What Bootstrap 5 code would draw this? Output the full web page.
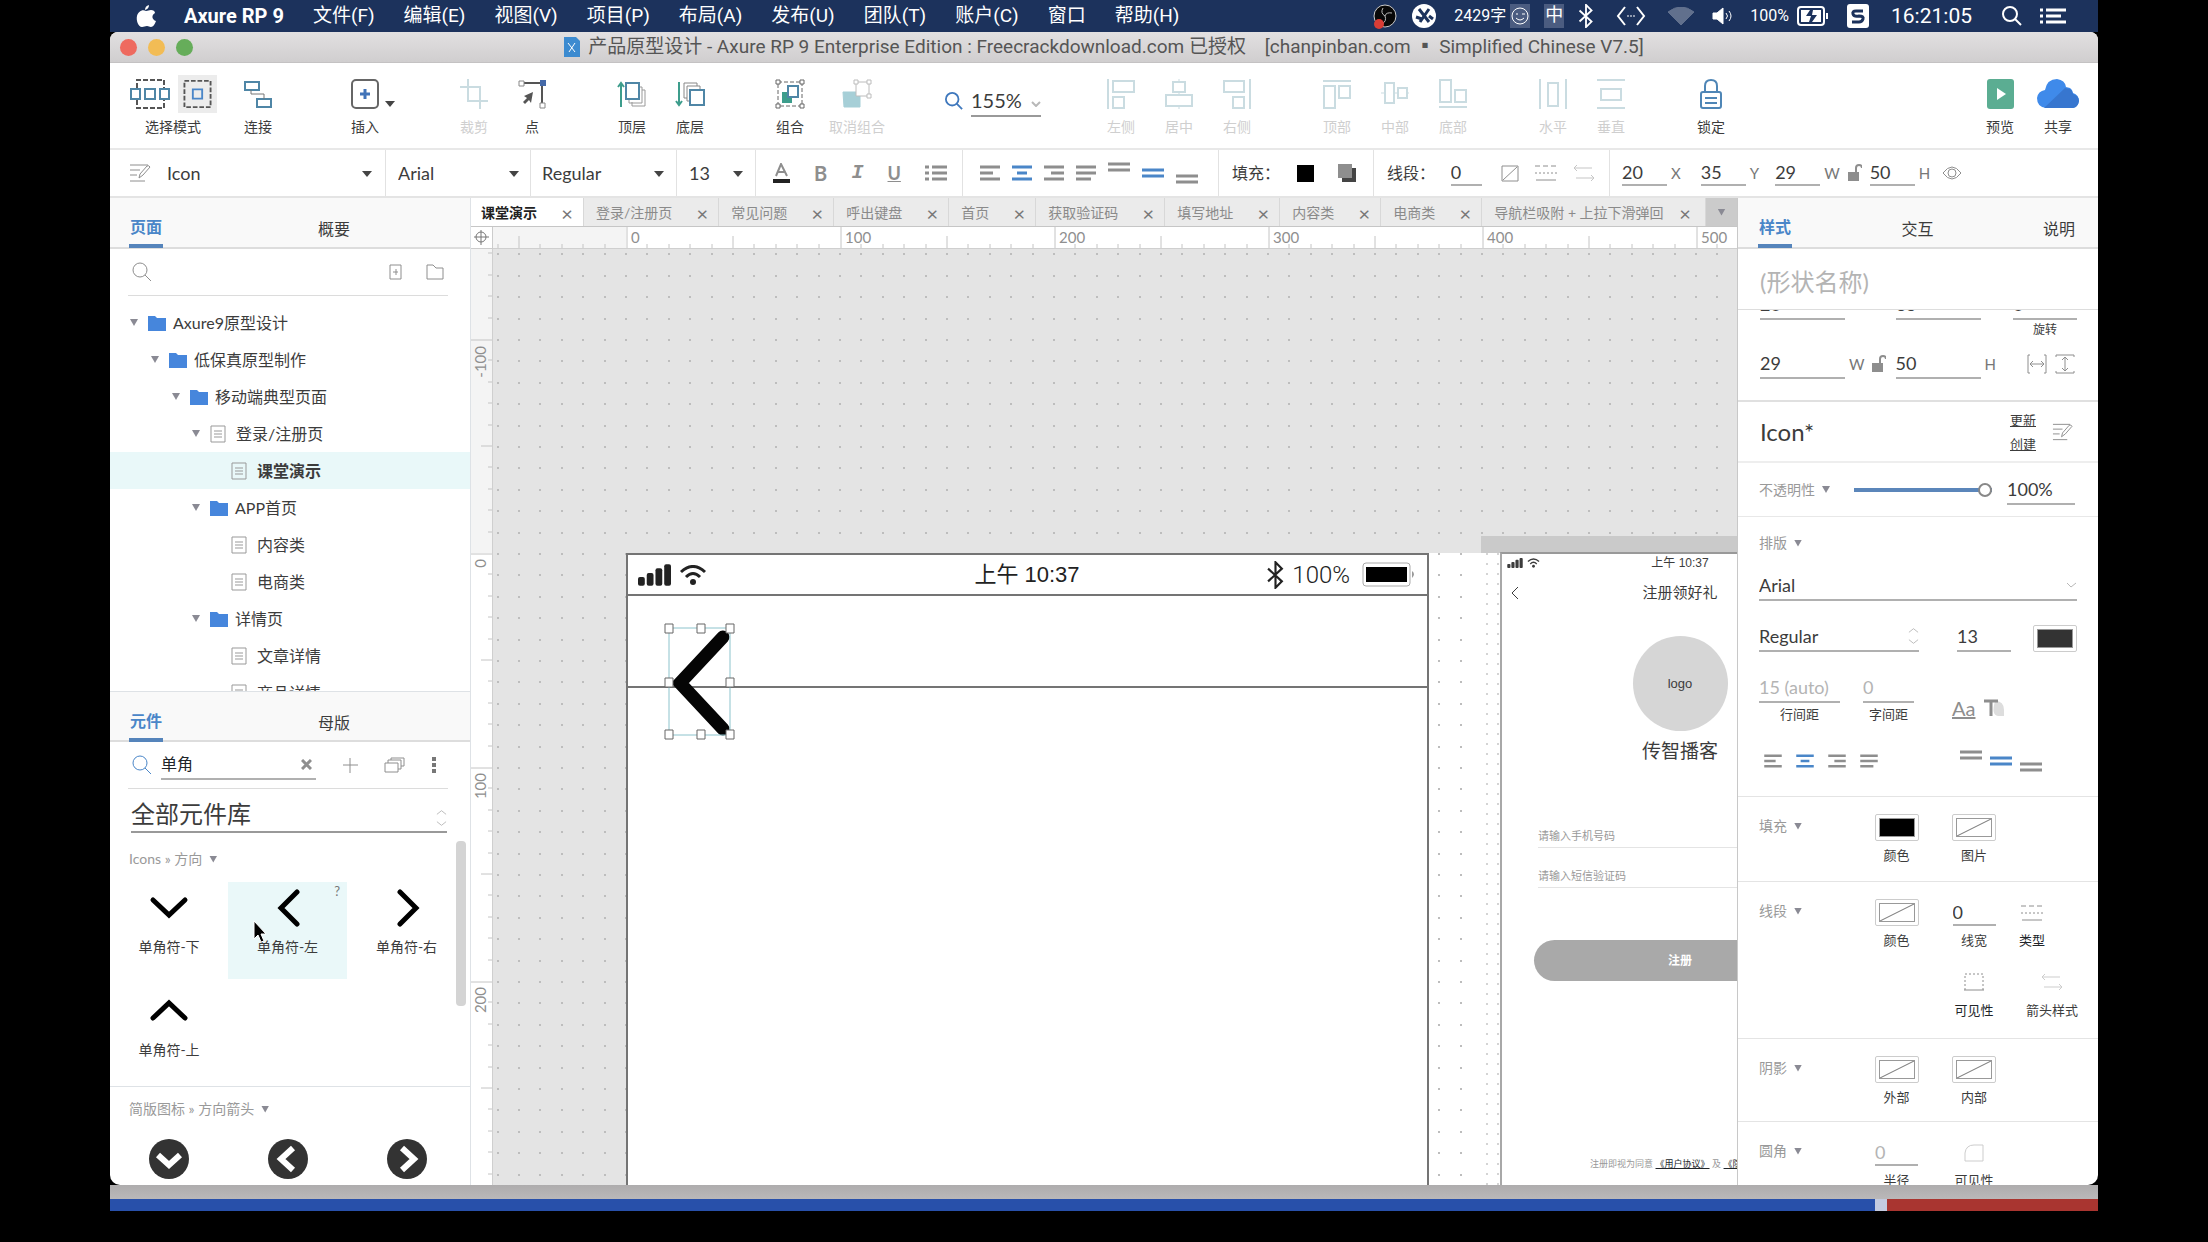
<!DOCTYPE html>
<html lang="zh-CN">
<head>
<meta charset="utf-8">
<meta name="viewport" content="width=device-width, initial-scale=1">
<title>产品原型设计 - Axure RP 9</title>
<link href="https://cdn.jsdelivr.net/npm/bootstrap@5.3.0/dist/css/bootstrap.min.css" rel="stylesheet">
<style>
:root{--ink:#3c3c3c;--blue:#4a86c8}
body{background:#000;color:var(--ink);font-family:Lato,"Noto Sans CJK SC",sans-serif;font-size:16px;line-height:24px;padding:0 110px;overflow:hidden}
button,input,select{font-family:inherit;color:inherit;background:none;border:0;padding:0;border-radius:0}
select{appearance:none}
svg{fill:none;stroke:currentColor;flex:none;display:block}
a{color:inherit}
.sysfont{font-family:Roboto,"Noto Sans CJK SC",sans-serif}
.menubar{height:32px;background:#1c325c;color:#fff;font-size:19px;padding:0 32px 0 26px}
.menubar nav{gap:29px}
.menubar a{text-decoration:none}
.tray{gap:14px;font-size:16px}
.imebox{background:#4b5c80;width:20px;height:24px;line-height:22px;text-align:center;font-size:18px}
.clock{font-size:21px}
.appwin{background:#fff;border-radius:8px 8px 10px 10px;overflow:hidden;min-height:0}
.titlebar{height:31px;background:linear-gradient(#e2e0e1,#d0cecf);color:#555;font-size:19px;border-bottom:1px solid #c4c2c3;position:relative}
.lights{position:absolute;left:10px;top:7px;gap:11px}
.lights button{width:17px;height:17px;border-radius:50%}
.toolbar{height:87px;border-bottom:2px solid #e8e8e8;padding:12px 11px 0 7px;font-size:14px}
.tool{width:58px;line-height:20px;display:flex;flex-direction:column;align-items:center}
.tool .pic{height:38px;margin-bottom:4px;display:flex;align-items:center;justify-content:center}
.tool.wide{width:76px}
.tool.pair{width:112px}
.tool.off{color:#cfcfcf}
.gapl{margin-left:51px}.gapm{margin-left:42px}
.tool.ins{margin-left:49px}
.pic .on{background:#ececec;padding:5px 4px}
.tool.off .pic svg{opacity:.55;color:#9fc0ca}
.tint{color:#3f78bd}.steel{color:#4f86b6}.pale{color:#b8b8b8}
.zoomer{font-size:20px;margin:9px 0 0 50px;height:34px}
.zoomer label{border-bottom:2px solid #999;width:70px;height:32px}
.fmtbar{height:48px;border-bottom:2px solid #e4e4e4;font-size:18px}
.fmtbar>div{height:46px;display:flex;align-items:center;border-right:1px solid #e2e2e2}
.fmtbar>div:last-child{border:0}
.pick{position:relative;display:flex;align-items:center}
.pick select{width:100%}
.caret::after{content:"";position:absolute;right:0;top:50%;margin-top:-2px;width:10px;height:6px;background:#444;clip-path:polygon(0 0,100% 0,50% 100%);pointer-events:none}
.tri{display:inline-block;width:8px;height:7px;background:#8a8a94;clip-path:polygon(0 0,100% 0,50% 100%);flex:none}
.uline{border-bottom:2px solid #b0b0b0;height:30px;font-size:18px;min-width:0}
.fmtbar .uline{width:45px;height:26px}
.grey{color:#8e8e8e}
.fbtn{color:#8e8e8e;display:flex;align-items:center;justify-content:center}
.hit,.fbtn.hit{color:var(--blue)}
.unit{font-size:15px;color:#777}
.side{width:360px;flex:none}
.sideR{width:361px;flex:none;border-left:1px solid #c8c8c8}
.ptabs{height:51px;background:#f9f9f9;border-bottom:2px solid #ddd;font-size:16px;position:relative;z-index:1}
.ptabs button{height:50px;padding-top:12px}
.ptabs .now{color:var(--blue);font-weight:700;border-bottom:4px solid #5584bb;width:34px}
.upper{height:493px;overflow:hidden;flex:none}
.findrow{margin:0 22px 0 18px;height:47px;border-bottom:1px solid #dcdcdc;color:#8e8e8e}
.tree{list-style:none;margin:0;padding:8px 0 0}
.tree li{height:37px;display:flex;align-items:center;padding-left:20px}
.tree li.l1{padding-left:41px}.tree li.l2{padding-left:62px}.tree li.l3{padding-left:82px}.tree li.l4{padding-left:121px}
.tree .tri{margin-right:10px}
.tree svg{margin-right:7px}.tree svg.doc{margin-right:10px;color:#999}
.tree .picked{background:#e9f8f9;font-weight:700}
.lib{font-size:24px;border-bottom:2px solid #999;height:44px;margin:0 23px 0 21px}
.libscroll{position:relative;overflow:hidden}
.thumb{position:absolute;right:4px;top:8px;width:10px;height:165px;border-radius:4px;background:#d4d4d4}
.libhead{font-size:14px;color:#999;padding:14px 0 0 19px;display:flex;align-items:center;gap:7px}
.grid3{display:grid;grid-template-columns:118px 119px 119px;row-gap:6px;padding-top:11px}
.grid3 button{height:97px;font-size:14px;display:flex;flex-direction:column;align-items:center;position:relative;padding-top:7px}
.grid3 button svg{margin-bottom:8px;color:#000}
.grid3 .hov{background:#eaf8f9}
.q{position:absolute;right:7px;top:-3px;color:#777;font-size:13px}
.mouse{position:absolute;left:24px;top:38px}
.dtabs{height:29px;background:#ebebeb;border-bottom:1px solid #c6c6c6;font-size:14px;color:#8a8a8a}
.dtab{padding:1px 10px 0 12px;border-right:1px solid #d8d8d8;display:flex;align-items:center;gap:24px;white-space:nowrap;flex:none}
.dtab a{text-decoration:none}
.dtab span{font-size:20px;font-weight:400;line-height:20px;color:#777;width:12px;text-align:center}
.dtab.cur{background:#fff;color:#222;font-weight:700;padding-left:10px}
.dtab.tail{flex:1 1 0;min-width:0;justify-content:space-between;gap:0;padding-right:14px;overflow:hidden}
.more{width:31px;background:#cbcbcb}
.stage{position:relative;overflow:hidden;background:#fff}
.stage>.ground,.rulerv svg,.rulerh svg{position:absolute;left:0;top:0}
.rulerh{height:22px;border-bottom:1px solid #cfcfcf;position:relative;overflow:hidden}
.rulerv{width:22px;border-right:1px solid #cfcfcf;position:relative;overflow:hidden;flex:none}
.corner{width:22px;height:22px;border-right:1px solid #ccc;border-bottom:1px solid #ccc;color:#777}
.rl{fill:#8f8f8f;stroke:none;font-size:15px}
.phone{position:absolute;left:133px;top:304px;width:803px;height:900px;background:#fff;border:2px solid #747474;color:#222}
.pbar{height:41px;border-bottom:2px solid #747474;display:grid;grid-template-columns:1fr auto 1fr;align-items:center;padding:0 11px 0 10px;font-size:22px;font-family:"Liberation Sans","Noto Sans CJK SC",sans-serif}
.light{font-family:Roboto,sans-serif;font-weight:300;font-size:24px}
.phead{height:92px;border-bottom:2px solid #747474}
.selbox{position:absolute;left:171px;top:374px}
.phone2{position:absolute;left:1007px;top:303px;width:358px;height:900px;background:#fff;border-left:2px solid #a8a8a8;border-top:2px solid #999;font-family:"Liberation Sans","Noto Sans CJK SC",sans-serif}
.p2bar{display:grid;grid-template-columns:1fr auto 1fr;padding:0 5px;height:18px;line-height:18px;font-size:12px;align-items:center}
.p2bar.p2title{height:42px;font-size:15px}
.logo{width:95px;height:95px;border-radius:50%;background:#d6d6d6;font-size:13px}
.ph{display:block;width:100%;border-bottom:1px solid #e4e4e4;height:24px;font-size:11px}
.ph::placeholder,.faint::placeholder{color:#b4b4b4;opacity:1}
.ph::placeholder{color:#9a9a9a}
.reg{height:41px;border-radius:21px;background:#a9a9a9;color:#fff;font-size:12px;font-weight:700;width:292px}
.terms{padding:171px 0 0 88px;font-size:9px;color:#999}
.sec{border-top:1px solid #e4e4e4;display:grid;grid-template-columns:96px 83px 72px 44px;padding:17px 0 0 21px;font-size:14px}
.seclab{color:#999;font-size:14px;display:flex;align-items:center;gap:7px;white-space:nowrap;height:24px}
.cell{display:flex;flex-direction:column;align-items:center;font-size:13px;line-height:20px;justify-self:center;white-space:nowrap}
.cell>.box{height:27px;margin-bottom:5px;display:flex;align-items:center}
.sw{width:44px;height:27px;border:1px solid #ccc;border-radius:2px;padding:3px;color:#999;display:block}
.sw i{display:block;height:19px;border:1px solid #999}
.sw .nil{background:linear-gradient(to bottom right,transparent 47%,#999 49%,#999 51%,transparent 53%)}
.shape{height:61px;border-bottom:1px solid #ddd;padding:4px 22px 0}
.shape input{font-size:24px;width:100%}
.range{appearance:none;width:138px;height:14px;background:linear-gradient(#5b86ba,#5b86ba) center/100% 4px no-repeat}
.range::-webkit-slider-thumb{appearance:none;width:14px;height:14px;border-radius:50%;border:2px solid #888;background:#fff}
.dims{height:90px;display:flow-root}
.dims .pos{margin-top:-20px;padding:0 21px 0 22px}
.desk{height:14px;background:linear-gradient(#aeacad,#bab8b9)}
.dock{height:12px;margin-bottom:31px;background:#c4cbe0}
.dock .db{background:#2850aa;flex:1 1 auto}.dock .dr{background:#a93530;width:211px;margin-left:12px}
</style>
<script src="https://cdn.jsdelivr.net/npm/bootstrap@5.3.0/dist/js/bootstrap.bundle.min.js"></script>
</head>
<body class="vh-100 d-flex flex-column">

<svg width="0" height="0" class="position-absolute">
  <defs>
    <symbol id="pencil" viewBox="0 0 22 20"><path d="M1 2h18M1 7h10M1 12h7M1 18h15M10 15l1-4 7-8q2-1 3 1l-7 8z"/></symbol>
    <symbol id="al" viewBox="0 0 20 16"><path d="M0 2h20M0 8h13M0 14h20" stroke-width="3"/></symbol>
    <symbol id="ac" viewBox="0 0 20 16"><path d="M0 2h20M5 8h10M0 14h20" stroke-width="3"/></symbol>
    <symbol id="ar" viewBox="0 0 20 16"><path d="M0 2h20M7 8h13M0 14h20" stroke-width="3"/></symbol>
    <symbol id="aj" viewBox="0 0 20 16"><path d="M0 2h20M0 8h20M0 14h15" stroke-width="3"/></symbol>
    <symbol id="vt" viewBox="0 0 22 22"><path d="M0 2h22M0 8h22" stroke-width="3"/></symbol>
    <symbol id="vm" viewBox="0 0 22 22"><path d="M0 8h22M0 14h22" stroke-width="3"/></symbol>
    <symbol id="vb" viewBox="0 0 22 22"><path d="M0 14h22M0 20h22" stroke-width="3"/></symbol>
    <symbol id="lines" viewBox="0 0 22 18"><path d="M0 2h22" stroke-dasharray="5 3"/><path d="M0 9h22" stroke-dasharray="2 2"/><path d="M1 16h20"/></symbol>
    <symbol id="arrows" viewBox="0 0 22 18"><path d="M4 1L1 4l3 3M1 4h18M18 11l3 3-3 3M21 14H3"/></symbol>
    <symbol id="lock" viewBox="0 0 14 18"><path d="M0 8h11v9H0z" fill="currentColor" stroke="none"/><path d="M8 8V4q0-3 3-3t3 3" stroke-width="2"/></symbol>
    <symbol id="glass" viewBox="0 0 20 20"><circle cx="8" cy="8" r="7"/><path d="M13 13l6 6"/></symbol>
    <symbol id="folder" viewBox="0 0 18 16"><path d="M0 1h7l2 2h9v13H0z" fill="#4686dc" stroke="none"/></symbol>
    <symbol id="doc" viewBox="0 0 16 18"><path d="M1 1h14v16H1zM4 6h8M4 9h8M4 12h8"/></symbol>
    <symbol id="updown" viewBox="0 0 12 18"><path d="M1 5l5-4 5 4M1 13l5 4 5-4"/></symbol>
    <symbol id="bt" viewBox="0 0 16 26"><path d="M1 7l13 12-6 6V1l6 6L1 19"/></symbol>
    <symbol id="bars" viewBox="0 0 34 22"><g fill="currentColor" stroke="none"><rect y="13" width="7" height="9" rx="2"/><rect x="9" y="9" width="7" height="13" rx="2"/><rect x="18" y="4" width="7" height="18" rx="2"/><rect x="27" width="7" height="22" rx="2"/></g></symbol>
    <symbol id="wifi" viewBox="0 0 28 20"><path d="M2 7q12-11 24 0M7 12q7-7 14 0" stroke-width="3"/><circle cx="14" cy="17" r="3" fill="currentColor" stroke="none"/></symbol>
  </defs>
</svg>

<header class="menubar sysfont d-flex align-items-center flex-shrink-0">
  <svg width="20" height="24" viewBox="0 0 20 24" style="fill:#fff;stroke:none" aria-label="Apple"><path d="M13 1q0 4-4 5 0-4 4-5zM10 7c2 0 3-1 5-1s4 1 4 3c-4 2-3 7 1 8-1 3-3 6-5 6s-2-1-4-1-3 1-5 1C2 23 0 16 1 12s5-7 9-5z"/></svg>
  <nav class="d-flex align-items-center ms-4 ps-1 text-nowrap">
    <a href="#" class="fw-bold fs-5">Axure RP 9</a><a href="#">文件(F)</a><a href="#">编辑(E)</a><a href="#">视图(V)</a><a href="#">项目(P)</a><a href="#">布局(A)</a><a href="#">发布(U)</a><a href="#">团队(T)</a><a href="#">账户(C)</a><a href="#">窗口</a><a href="#">帮助(H)</a>
  </nav>
  <div class="tray d-flex align-items-center ms-auto">
    <svg width="25" height="25" viewBox="0 0 25 25"><circle cx="12" cy="12" r="11" fill="#080808" stroke="#ccc"/><path d="M12 12q-5-3-2-8M12 12q1-4 7-3M12 12q2 5-3 8" stroke="#bbb"/><circle cx="6" cy="20" r="5" fill="#d93d36" stroke="none"/></svg>
    <svg width="24" height="24" viewBox="0 0 24 24"><circle cx="12" cy="12" r="12" fill="#fff" stroke="none"/><path d="M7 5l10 13M17 5L8 18M4 13l6 2M17 12l4 3" stroke="#1c325c" stroke-width="3"/></svg>
    <span class="d-flex align-items-center">&nbsp;2429字<svg class="ms-1 imebox" width="20" height="22" viewBox="0 0 20 22"><circle cx="10" cy="11" r="8"/><path d="M6 9h2M12 9h3M6 13q4 4 8 0"/></svg></span>
    <span class="imebox">中</span>
    <svg width="16" height="24" stroke-width="2"><use href="#bt"/></svg>
    <svg class="mx-2" width="30" height="20" viewBox="0 0 30 20" stroke-width="2"><path d="M9 1L2 10l7 9M21 1l7 9-7 9"/><path d="M11 10h8" stroke-dasharray="2 1" opacity=".5"/></svg>
    <svg width="26" height="18" viewBox="0 0 26 18" opacity=".3"><path d="M0 5q13-10 26 0L13 18z" fill="#fff"/></svg>
    <svg class="ms-1" width="20" height="20" viewBox="0 0 20 20"><path d="M1 7h4l6-5v16l-6-5H1z" fill="#fff"/><path d="M14 7q3 3 0 6M17 5q4 5 0 10"/></svg>
    <span class="d-flex align-items-center ms-1">100%<svg class="ms-2" width="32" height="20" viewBox="0 0 32 20" stroke-width="2"><rect x="1" y="1" width="26" height="18" rx="3"/><path d="M30 7v6"/><path d="M4 4h9l-4 6h5l-2 6H4zM16 4h8v12h-9l5-7h-5z" fill="#fff" stroke="none"/></svg></span>
    <svg class="ms-1" width="22" height="24" viewBox="0 0 22 24"><rect width="22" height="24" rx="3" fill="#fff" stroke="none"/><path d="M16 7H9q-4 0-3 3t6 2q5 0 4 3t-4 3H5" stroke="#1c325c" stroke-width="3"/></svg>
    <span class="clock ms-2 me-2">16:21:05</span>
    <svg class="ms-2" width="20" height="20" stroke-width="2"><use href="#glass"/></svg>
    <svg class="ms-1" width="26" height="16" viewBox="0 0 26 16" stroke-width="3"><path d="M0 2h3M6 2h20M0 8h3M6 8h15M0 14h3M6 14h20"/></svg>
  </div>
</header>

<div class="appwin d-flex flex-column flex-grow-1">
  <div class="titlebar sysfont d-flex justify-content-center align-items-center flex-shrink-0">
    <div class="lights d-flex"><button aria-label="关闭" style="background:#ee6a5f"></button><button aria-label="最小化" style="background:#f2bc55"></button><button aria-label="缩放" style="background:#66ad5a"></button></div>
    <svg class="me-2" width="16" height="20" viewBox="0 0 16 20"><path d="M0 0h12l4 4v16H0z" fill="#3c8bd0" stroke="none"/><path d="M4 6l7 9M11 6l-6 9" stroke="#fff" stroke-width="1"/></svg>
    <span class="text-nowrap">产品原型设计 - Axure RP 9 Enterprise Edition : Freecrackdownload.com 已授权 &nbsp; &nbsp;[chanpinban.com ▪ Simplified Chinese V7.5]</span>
  </div>

  <div class="toolbar d-flex align-items-start flex-shrink-0">
    <button class="tool pair"><span class="pic gap-2">
      <svg width="40" height="30" viewBox="0 0 40 30"><path d="M7 9V1h27v8M7 21v8h27v-8" stroke="#555" stroke-dasharray="5 2" stroke-width="2"/><path d="M1 10h9v10H1zM15 10h10v10H15zM30 10h9v10h-9z" stroke="#4f86a6" stroke-width="2"/></svg>
      <svg class="on" width="39" height="38" viewBox="0 0 30 30"><path d="M1 1h28v28H1z" stroke="#555" stroke-dasharray="5 2" stroke-width="2"/><path d="M10 10h10v10H10z" stroke="#4a86c8" stroke-width="2"/></svg></span>选择模式</button>
    <button class="tool"><span class="pic"><svg width="28" height="28" viewBox="0 0 28 28"><path d="M1 2h14v8H1zM13 19h14v8H13z" stroke="#4f86a6" stroke-width="2"/><path d="M7 10v4h13v5" stroke="#777"/></svg></span>连接</button>
    <button class="tool ins position-relative"><span class="pic"><svg width="28" height="30" viewBox="0 0 28 30"><rect x="1" y="1" width="26" height="28" rx="4" stroke="#666" stroke-width="2"/><path d="M14 10v10M9 15h10" stroke="#4173b8" stroke-width="3"/></svg></span>插入<span class="caret position-absolute" style="right:-1px;top:28px"></span></button>
    <button class="tool off gapl" disabled><span class="pic"><svg width="28" height="30" viewBox="0 0 28 30" stroke-width="2"><path d="M0 8h20v22M8 0v22h20"/></svg></span>裁剪</button>
    <button class="tool"><span class="pic"><svg width="28" height="30" viewBox="0 0 28 30"><path d="M4 4h20v22" stroke="#555" stroke-width="2"/><path d="M1 2h5v5H1zM22 24h5v5h-5z" stroke="#888" fill="#fff"/><path d="M22 1h6v6h-6z" fill="#456aa8" stroke="none"/><path d="M15 13l-2 11-2-3-4 4-2-2 4-4-3-2z" fill="#555" stroke="none"/></svg></span>点</button>
    <button class="tool gapm"><span class="pic"><svg width="30" height="28" viewBox="0 0 30 28"><path d="M4 27V3M1 7l3-4 3 4" stroke="#3d9d8c" stroke-width="2"/><path d="M15 22v4h13V10h-3M12 20v3h13V7h-3" stroke="#999"/><path d="M9 3h13v16H9z" fill="#fff" stroke="#4f86a6" stroke-width="2"/></svg></span>顶层</button>
    <button class="tool"><span class="pic"><svg width="30" height="28" viewBox="0 0 30 28"><path d="M4 2v23M1 21l3 4 3-4" stroke="#3d9d8c" stroke-width="2"/><path d="M12 18H9V3h13v3M15 21h-3V6h13v3" stroke="#888"/><path d="M15 10h14v15H15z" fill="#fff" stroke="#4f86a6" stroke-width="2"/></svg></span>底层</button>
    <button class="tool gapm"><span class="pic"><svg width="30" height="30" viewBox="0 0 30 30"><path d="M3 3h24v24H3z" stroke="#666" stroke-dasharray="4 2"/><path d="M1 1h4v4H1zM25 1h4v4h-4zM1 25h4v4H1zM25 25h4v4h-4z" fill="#fff" stroke="#666"/><path d="M7 13h10v11H7z" fill="#3d9d8c" stroke="none"/><path d="M13 7h10v11H13z" fill="#fff" stroke="#4f86a6" stroke-width="2"/></svg></span>组合</button>
    <button class="tool wide off" disabled><span class="pic"><svg width="30" height="30" viewBox="0 0 30 30"><path d="M1 13h13v4h4v11H2z" fill="#5fa9b8" stroke="#5fa9b8"/><path d="M14 3h13v14H14z" fill="#fff" stroke="#888"/><path d="M12 1h4v4h-4zM25 1h4v4h-4zM25 15h4v4h-4z" fill="#fff" stroke="#888"/></svg></span>取消组合</button>
    <div class="zoomer d-flex align-items-center gap-2"><svg class="tint" width="18" height="20" stroke-width="2"><use href="#glass"/></svg><label class="pick"><select aria-label="缩放比例"><option>155%</option></select><svg class="pale position-absolute end-0 bottom-0 mb-2" width="10" height="6" viewBox="0 0 10 6" stroke-width="2"><path d="M1 1l4 4 4-4"/></svg></label></div>
    <button class="tool off gapl" disabled><span class="pic"><svg width="28" height="30" viewBox="0 0 28 30" stroke-width="2"><path d="M1 0v30M6 2h21v11H6zM6 18h11v11H6z"/></svg></span>左侧</button>
    <button class="tool off" disabled><span class="pic"><svg width="28" height="30" viewBox="0 0 28 30" stroke-width="2"><path d="M14 0v30" stroke-width="1"/><path d="M8 3h12v10H8zM1 16h26v11H1z" fill="#fff"/></svg></span>居中</button>
    <button class="tool off" disabled><span class="pic"><svg width="28" height="30" viewBox="0 0 28 30" stroke-width="2"><path d="M27 0v30M1 2h20v11H1zM10 18h11v11H10z"/></svg></span>右侧</button>
    <button class="tool off gapm" disabled><span class="pic"><svg width="28" height="30" viewBox="0 0 28 30" stroke-width="2"><path d="M0 2h28M1 7h11v22H1zM16 7h11v12H16z"/></svg></span>顶部</button>
    <button class="tool off" disabled><span class="pic"><svg width="28" height="30" viewBox="0 0 28 30" stroke-width="2"><path d="M0 14h28" stroke-width="1"/><path d="M4 4h9v20H4zM17 9h9v10h-9z" fill="#fff"/></svg></span>中部</button>
    <button class="tool off" disabled><span class="pic"><svg width="28" height="30" viewBox="0 0 28 30" stroke-width="2"><path d="M0 28h28M1 1h11v22H1zM16 11h11v12H16z"/></svg></span>底部</button>
    <button class="tool off gapm" disabled><span class="pic"><svg width="28" height="30" viewBox="0 0 28 30" stroke-width="2"><path d="M1 0v30M27 0v30M9 4h10v23H9z"/></svg></span>水平</button>
    <button class="tool off" disabled><span class="pic"><svg width="28" height="30" viewBox="0 0 28 30" stroke-width="2"><path d="M0 1h28M0 29h28M4 10h20v11H4z"/></svg></span>垂直</button>
    <button class="tool gapm"><span class="pic"><svg class="steel" width="22" height="30" viewBox="0 0 22 30" stroke-width="2"><path d="M5 13V7q0-6 6-6t6 6v6"/><rect x="1" y="13" width="20" height="16" rx="2"/><path d="M5 19h12M5 24h12"/></svg></span>锁定</button>
    <button class="tool ms-auto"><span class="pic"><svg width="27" height="30" viewBox="0 0 27 30"><rect width="27" height="30" rx="3" fill="#5bad92" stroke="none"/><path d="M10 9l9 6-9 6z" fill="#fff" stroke="none"/></svg></span>预览</button>
    <button class="tool"><span class="pic"><svg width="42" height="30" viewBox="0 0 42 30"><path d="M9 29q-9-1-9-10 1-7 8-8Q10 0 20 0q8 1 9 8l4 1q3 2 3 5 6 2 6 8-1 6-6 7z" fill="#3f8aea" stroke="none"/><path d="M7 29L28 9l5 1q3 2 3 5 6 2 6 7-1 6-6 7z" fill="#3776cf" stroke="none"/></svg></span>共享</button>
  </div>

  <div class="fmtbar d-flex flex-shrink-0">
    <div style="width:276px;padding:0 13px 0 19px"><svg class="grey me-3" width="22" height="20"><use href="#pencil"/></svg><label class="pick caret flex-grow-1"><select aria-label="样式"><option>Icon</option></select></label></div>
    <div style="width:145px;padding:0 11px 0 12px"><label class="pick caret flex-grow-1"><select aria-label="字体"><option>Arial</option></select></label></div>
    <div style="width:146px;padding:0 12px 0 11px"><label class="pick caret flex-grow-1"><select aria-label="字型"><option>Regular</option></select></label></div>
    <div style="width:79px;padding:0 12px"><label class="pick caret flex-grow-1"><select aria-label="字号"><option>13</option></select></label></div>
    <div style="width:207px;padding:0 15px 0 17px" class="justify-content-between">
      <button class="fbtn" aria-label="文字颜色"><svg width="17" height="20" viewBox="0 0 17 20"><path d="M3 13L8 1l6 12M5 9h7" stroke-width="2"/><path d="M0 18h17" stroke="#222" stroke-width="4"/></svg></button>
      <button class="fbtn fw-bold fs-5">B</button>
      <button class="fbtn fw-bold fst-italic fs-5" style="font-family:'Liberation Mono',monospace">I</button>
      <button class="fbtn fw-bold text-decoration-underline">U</button>
      <button class="fbtn" aria-label="项目符号"><svg width="22" height="18" viewBox="0 0 22 18"><path d="M0 3h4M7 3h15M0 9h4M7 9h15M0 15h4M7 15h15" stroke-width="3"/></svg></button>
    </div>
    <div style="width:256px;padding:0 20px 0 17px" class="justify-content-between">
      <button class="fbtn" aria-label="左对齐"><svg width="20" height="16"><use href="#al"/></svg></button><button class="fbtn hit" aria-label="居中"><svg width="20" height="16"><use href="#ac"/></svg></button><button class="fbtn" aria-label="右对齐"><svg width="20" height="16"><use href="#ar"/></svg></button><button class="fbtn" aria-label="两端对齐"><svg width="20" height="16"><use href="#aj"/></svg></button>
      <button class="fbtn" aria-label="顶对齐"><svg width="22" height="22"><use href="#vt"/></svg></button><button class="fbtn hit" aria-label="垂直居中"><svg width="22" height="22"><use href="#vm"/></svg></button><button class="fbtn" aria-label="底对齐"><svg width="22" height="22"><use href="#vb"/></svg></button>
    </div>
    <div style="width:155px;padding:0 17px 0 13px;font-size:16px" class="justify-content-between">填充：<button class="fbtn" aria-label="填充颜色"><svg width="17" height="17"><path d="M0 0h17v17H0z" fill="#000" stroke="none"/></svg></button><button class="fbtn ps-2" aria-label="阴影"><svg width="18" height="18"><path d="M4 4h14v14H4z" fill="#444" stroke="none"/><path d="M0 0h14v14H0z" fill="#8e8e8e" stroke="none"/></svg></button></div>
    <div style="width:236px;padding:0 14px 0 13px;font-size:16px" class="justify-content-between">线段：<input class="uline" style="width:31px" value="0" aria-label="线宽"><button class="fbtn ms-1" aria-label="线条颜色"><svg width="18" height="17" viewBox="0 0 18 17"><path d="M1 1h16v15H1zM2 15L16 2"/></svg></button><button class="fbtn" aria-label="线型"><svg width="22" height="18"><use href="#lines"/></svg></button><button class="fbtn opacity-50" aria-label="箭头"><svg width="22" height="18"><use href="#arrows"/></svg></button></div>
    <div class="flex-grow-1 gap-1" style="padding-left:12px">
      <input class="uline" value="20" aria-label="X"><span class="unit me-3">X</span><input class="uline" value="35" aria-label="Y"><span class="unit me-2 pe-1">Y</span><input class="uline" value="29" aria-label="W"><span class="unit">W</span><svg class="grey mx-1" width="14" height="18"><use href="#lock"/></svg><input class="uline" value="50" aria-label="H"><span class="unit me-2">H</span><svg class="grey" width="20" height="14" viewBox="0 0 20 14"><path d="M1 7q9-12 18 0-9 12-18 0z"/><circle cx="10" cy="7" r="4"/></svg>
    </div>
  </div>

  <div class="d-flex flex-grow-1" style="min-height:0">
    <aside class="side d-flex flex-column">
      <div class="upper">
        <div class="ptabs d-flex" style="padding-left:19px"><button class="now">页面</button><button style="margin-left:155px">概要</button></div>
        <div class="findrow d-flex align-items-center ps-1"><svg width="20" height="20"><use href="#glass"/></svg><input class="flex-grow-1" aria-label="搜索页面"><button aria-label="添加页面" class="me-4"><svg width="13" height="16" viewBox="0 0 13 16"><path d="M1 1h11v14H1zM4 8h5M7 5v6"/></svg></button><button class="me-1" aria-label="添加文件夹"><svg width="18" height="16" viewBox="0 0 18 16"><path d="M1 1h6l3 3h7v11H1z"/></svg></button></div>
        <ul class="tree">
          <li><i class="tri"></i><svg width="18" height="16"><use href="#folder"/></svg>Axure9原型设计</li>
          <li class="l1"><i class="tri"></i><svg width="18" height="16"><use href="#folder"/></svg>低保真原型制作</li>
          <li class="l2"><i class="tri"></i><svg width="18" height="16"><use href="#folder"/></svg>移动端典型页面</li>
          <li class="l3"><i class="tri"></i><svg class="doc" width="16" height="18"><use href="#doc"/></svg>登录/注册页</li>
          <li class="l4 picked"><svg class="doc" width="16" height="18"><use href="#doc"/></svg>课堂演示</li>
          <li class="l3"><i class="tri"></i><svg width="18" height="16"><use href="#folder"/></svg>APP首页</li>
          <li class="l4"><svg class="doc" width="16" height="18"><use href="#doc"/></svg>内容类</li>
          <li class="l4"><svg class="doc" width="16" height="18"><use href="#doc"/></svg>电商类</li>
          <li class="l3"><i class="tri"></i><svg width="18" height="16"><use href="#folder"/></svg>详情页</li>
          <li class="l4"><svg class="doc" width="16" height="18"><use href="#doc"/></svg>文章详情</li>
          <li class="l4"><svg class="doc" width="16" height="18"><use href="#doc"/></svg>商品详情</li>
        </ul>
      </div>
      <div class="ptabs d-flex border-top flex-shrink-0" style="padding-left:19px"><button class="now">元件</button><button style="margin-left:155px">母版</button></div>
      <div class="findrow d-flex align-items-center ps-1 flex-shrink-0"><svg class="hit" width="20" height="20"><use href="#glass"/></svg>
        <div class="uline d-flex align-items-center" style="width:155px;margin-left:9px"><input class="flex-grow-1 w-50 fs-6 text-dark" value="单角" aria-label="搜索元件"><button class="fw-bold lh-1 me-1" aria-label="清除"><svg width="11" height="11" viewBox="0 0 11 11" stroke-width="3"><path d="M1 1l9 9M10 1l-9 9"/></svg></button></div>
        <button class="ms-auto" aria-label="添加"><svg width="15" height="15" viewBox="0 0 15 15"><path d="M7 0v15M0 7h15"/></svg></button>
        <button style="margin:0 27px 0 26px" aria-label="元件库"><svg width="21" height="16" viewBox="0 0 21 16"><path d="M1 6h13v9H1zM4 6V3h13v9h-3M7 3V1h13v8h-3"/></svg></button>
        <button class="me-2 pe-1" aria-label="更多"><svg width="4" height="16"><path d="M0 0h4v4H0zM0 6h4v4H0zM0 12h4v4H0z" fill="#777" stroke="none"/></svg></button></div>
      <label class="lib pick flex-shrink-0"><select class="pt-2" aria-label="元件库"><option>全部元件库</option></select><svg class="pale position-absolute end-0 bottom-0 mb-1" width="11" height="18"><use href="#updown"/></svg></label>
      <div class="libscroll flex-grow-1">
        <div class="thumb"></div>
        <div class="libhead">Icons » 方向 <i class="tri"></i></div>
        <div class="grid3">
          <button><svg width="40" height="38" viewBox="0 0 40 38" stroke-width="5" stroke-linecap="round"><path d="M4 11l16 15 16-15"/></svg>单角符-下</button>
          <button class="hov"><svg width="40" height="38" viewBox="0 0 40 38" stroke-width="5" stroke-linecap="round"><path d="M29 3L13 19l16 16"/></svg>单角符-左<span class="q">?</span>
            <svg class="mouse" width="16" height="24" viewBox="0 0 16 24"><path d="M2 1l12 13H9l3 7-3 1-3-7-4 4z" fill="#000" stroke="#fff"/></svg></button>
          <button><svg width="40" height="38" viewBox="0 0 40 38" stroke-width="5" stroke-linecap="round"><path d="M13 3l16 16-16 16"/></svg>单角符-右</button>
          <button><svg width="40" height="38" viewBox="0 0 40 38" stroke-width="5" stroke-linecap="round"><path d="M4 26l16-15 16 15"/></svg>单角符-上</button>
        </div>
        <div class="libhead border-top mt-1" style="padding-top:10px">简版图标 » 方向箭头 <i class="tri"></i></div>
        <div class="grid3">
          <button aria-label="向下"><svg width="40" height="40" viewBox="0 0 40 40"><circle cx="20" cy="20" r="20" fill="#333" stroke="none"/><path d="M9 16l11 10 11-10" stroke="#fff" stroke-width="6"/></svg></button>
          <button aria-label="向左"><svg width="40" height="40" viewBox="0 0 40 40"><circle cx="20" cy="20" r="20" fill="#333" stroke="none"/><path d="M25 9L13 20l12 11" stroke="#fff" stroke-width="6"/></svg></button>
          <button aria-label="向右"><svg width="40" height="40" viewBox="0 0 40 40"><circle cx="20" cy="20" r="20" fill="#333" stroke="none"/><path d="M15 9l12 11-12 11" stroke="#fff" stroke-width="6"/></svg></button>
        </div>
      </div>
    </aside>

    <main class="d-flex flex-column flex-grow-1 border-start" style="min-width:0">
      <div class="dtabs d-flex flex-shrink-0">
        <div class="dtab cur"><a href="#">课堂演示</a><span>×</span></div><div class="dtab"><a href="#">登录/注册页</a><span>×</span></div><div class="dtab"><a href="#">常见问题</a><span>×</span></div><div class="dtab"><a href="#">呼出键盘</a><span>×</span></div><div class="dtab"><a href="#">首页</a><span>×</span></div><div class="dtab"><a href="#">获取验证码</a><span>×</span></div><div class="dtab"><a href="#">填写地址</a><span>×</span></div><div class="dtab"><a href="#">内容类</a><span>×</span></div><div class="dtab"><a href="#">电商类</a><span>×</span></div><div class="dtab tail"><a href="#">导航栏吸附 + 上拉下滑弹回</a><span>×</span></div>
        <button class="more flex-shrink-0 d-flex align-items-center justify-content-center" aria-label="更多标签"><i class="tri"></i></button>
      </div>
      <div class="d-flex flex-shrink-0">
        <div class="corner d-flex align-items-center justify-content-center flex-shrink-0"><svg width="15" height="15" viewBox="0 0 15 15"><circle cx="7" cy="7" r="5"/><path d="M7 0v15M0 7h15"/></svg></div>
        <div class="rulerh flex-grow-1"><svg width="100%" height="22">
          <defs><pattern id="rh" x="133" width="214" height="22" patternUnits="userSpaceOnUse"><path d="M1 0v22M21 17v5M43 17v5M64 17v5M86 17v5M107 9v13M128 17v5M150 17v5M171 17v5M193 17v5" stroke="#c4c4c4"/></pattern></defs>
          <rect width="133" height="22" fill="#f4f4f4" stroke="none"/><rect width="100%" height="22" fill="url(#rh)" stroke="none"/>
          <g class="rl"><text x="138" y="16">0</text><text x="352" y="16">100</text><text x="566" y="16">200</text><text x="780" y="16">300</text><text x="994" y="16">400</text><text x="1208" y="16">500</text></g></svg></div>
      </div>
      <div class="d-flex flex-grow-1" style="min-height:0">
        <div class="rulerv"><svg width="22" height="100%">
          <defs><pattern id="rv" y="90" width="22" height="214" patternUnits="userSpaceOnUse"><path d="M0 1h22M17 21h5M17 43h5M17 64h5M17 86h5M10 107h12M17 128h5M17 150h5M17 171h5M17 193h5" stroke="#c4c4c4"/></pattern></defs>
          <rect width="22" height="304" fill="#f4f4f4" stroke="none"/><rect width="22" height="100%" fill="url(#rv)" stroke="none"/>
          <g class="rl" text-anchor="end"><text transform="translate(15 97) rotate(-90)">-100</text><text transform="translate(15 310) rotate(-90)">0</text><text transform="translate(15 524) rotate(-90)">100</text><text transform="translate(15 738) rotate(-90)">200</text></g></svg></div>
        <div class="stage flex-grow-1">
          <svg class="ground" width="100%" height="100%">
            <defs>
              <pattern id="dots" x="132" y="90" width="107" height="107" patternUnits="userSpaceOnUse"><g stroke="#bdbdbd" stroke-width="2"><path id="dr" d="M0 1h2M21 1h2M43 1h2M64 1h2M86 1h2"/><use href="#dr" y="21"/><use href="#dr" y="43"/><use href="#dr" y="64"/><use href="#dr" y="86"/></g></pattern>
              <pattern id="fine" x="993" y="304" width="11" height="10" patternUnits="userSpaceOnUse"><path d="M0 1h2" stroke="#d4d4d4" stroke-width="2"/></pattern>
            </defs>
            <rect width="100%" height="304" fill="#e4e4e4" stroke="none"/><rect width="133" height="100%" fill="#e4e4e4" stroke="none"/>
            <rect width="100%" height="100%" fill="url(#dots)" stroke="none"/>
            <rect x="987" y="304" width="400" height="900" fill="#fff" stroke="none"/>
            <rect x="988" y="304" width="20" height="900" fill="url(#fine)" stroke="none"/>
            <rect x="988" y="287" width="400" height="17" fill="#cacaca" stroke="none"/>
          </svg>
          <div class="phone">
            <div class="pbar"><span class="d-flex gap-2 align-items-center"><svg width="33" height="22"><use href="#bars"/></svg><svg width="28" height="20"><use href="#wifi"/></svg></span><span>上午 10:37</span><span class="d-flex align-items-center justify-content-end"><svg width="17" height="28" stroke-width="2"><use href="#bt"/></svg><span class="light ms-2">100%</span><svg class="ms-2 ps-1" width="58" height="25" viewBox="0 0 54 25"><rect x="1" y="1" width="47" height="23" rx="3" stroke="#aaa"/><path d="M4 5h41v15H4z" fill="#000" stroke="none"/><path d="M50 9q4 3 0 7z" fill="#999" stroke="none"/></svg></span></div>
            <div class="phead"></div>
          </div>
          <svg class="selbox" width="72" height="118" viewBox="0 0 72 118"><path d="M59 14L16 60l43 46" stroke="#050505" stroke-width="13" stroke-linecap="round"/><path d="M5 5h61v107H5z" stroke="#8cc3cc"/><g fill="#fff" stroke="#666"><path d="M1 1h8v9H1zM33 1h8v9h-8zM62 1h8v9h-8zM1 55h8v9H1zM62 55h8v9h-8zM1 107h8v9H1zM33 107h8v9h-8zM62 107h8v9h-8z"/></g></svg>
          <div class="phone2">
            <div class="p2bar"><span class="d-flex gap-1"><svg width="16" height="10"><use href="#bars"/></svg><svg width="13" height="10"><use href="#wifi"/></svg></span><span>上午 10:37</span><span></span></div>
            <div class="p2bar p2title"><svg class="ms-1" width="8" height="14" viewBox="0 0 8 14"><path d="M7 1L1 7l6 6"/></svg><span>注册领好礼</span><span></span></div>
            <div class="d-flex flex-column align-items-center" style="padding-top:22px"><div class="logo d-flex align-items-center justify-content-center">logo</div><div style="font-size:19px;padding-top:9px">传智播客</div></div>
            <div style="padding:56px 32px 0 36px"><input class="ph mt-1 mb-3" placeholder="请输入手机号码" aria-label="手机号码"><input class="ph" placeholder="请输入短信验证码" aria-label="短信验证码"></div>
            <div class="d-flex justify-content-center" style="padding-top:52px"><button class="reg">注册</button></div>
            <div class="terms text-nowrap">注册即视为同意 <a href="#" class="text-dark">《用户协议》</a> 及 <a href="#" class="text-dark">《隐私政策》</a></div>
          </div>
        </div>
      </div>
    </main>

    <aside class="sideR d-flex flex-column">
      <div class="ptabs d-flex justify-content-between flex-shrink-0" style="padding:0 23px 0 20px"><button class="now">样式</button><button>交互</button><button>说明</button></div>
      <div class="shape d-flex align-items-center flex-shrink-0"><input class="faint" placeholder="(形状名称)" aria-label="形状名称"></div>
      <div class="overflow-hidden flex-grow-1">
        <div class="dims">
          <div class="pos d-flex"><input class="uline" style="width:85px" value="20" aria-label="X"><input class="uline" style="width:85px;margin-left:51px" value="35" aria-label="Y"><div class="ms-auto text-center" style="width:64px;font-size:12px"><input class="uline w-100 d-block" id="rot" value="0"><label for="rot" class="d-block" style="line-height:20px">旋转</label></div></div>
          <div class="d-flex align-items-center" style="padding:9px 23px 0 22px"><input class="uline" style="width:85px" value="29" aria-label="宽"><span class="unit ms-1">W</span><svg class="grey" style="margin:0 5px 0 7px" width="14" height="18"><use href="#lock"/></svg><input class="uline" style="width:85px;margin-left:5px" value="50" aria-label="高"><span class="unit ms-1">H</span>
            <svg class="grey ms-auto" width="20" height="20" viewBox="0 0 20 20"><path d="M3 1H1v18h2M17 1h2v18h-2M3 10h14M6 7l-3 3 3 3M14 7l3 3-3 3"/></svg><svg class="grey ms-2" width="20" height="20" viewBox="0 0 20 20"><path d="M1 3V1h18v2M1 17v2h18v-2M10 3v14M7 6l3-3 3 3M7 14l3 3 3-3"/></svg></div>
        </div>
        <div class="d-flex align-items-center" style="height:61px;padding:0 25px 0 22px;border-top:2px solid #e0e0e0"><span style="font-size:24px">Icon*</span><span class="ms-auto d-flex flex-column" style="font-size:13px"><a href="#">更新</a><a href="#">创建</a></span><svg class="grey ms-3" width="21" height="20"><use href="#pencil"/></svg></div>
        <div class="d-flex align-items-center" style="height:55px;padding:0 23px 0 21px;border-top:2px solid #eee"><span class="seclab">不透明性 <i class="tri"></i></span><input type="range" class="range ms-auto" value="100" aria-label="不透明性"><input class="uline" style="width:68px;margin-left:15px" value="100%" aria-label="不透明性数值"></div>
        <div style="height:280px;padding:14px 21px 0;border-top:1px solid #e8e8e8">
          <div class="seclab">排版 <i class="tri"></i></div>
          <label class="pick uline mt-3"><select aria-label="字体"><option>Arial</option></select><svg class="pale position-absolute end-0" width="11" height="7" viewBox="0 0 11 7"><path d="M1 1l4 4 5-4"/></svg></label>
          <div class="d-flex align-items-end" style="margin-top:21px"><label class="pick uline" style="width:160px"><select aria-label="字型"><option>Regular</option></select><svg class="pale position-absolute end-0" width="11" height="18"><use href="#updown"/></svg></label><input class="uline" style="width:54px;margin-left:38px" value="13" aria-label="字号"><button class="sw ms-auto" aria-label="文字颜色"><i style="background:#333"></i></button></div>
          <div class="d-flex" style="margin-top:21px;font-size:13px;line-height:22px"><div class="text-center" style="width:81px"><input class="uline faint w-100 d-block" id="lh" placeholder="15 (auto)"><label class="d-block" for="lh">行间距</label></div><div class="text-center" style="width:51px;margin-left:23px"><input class="uline faint w-100 d-block" id="ls" placeholder="0"><label class="d-block text-nowrap" for="ls">字间距</label></div>
            <button class="grey text-decoration-underline fs-5" style="margin-left:38px;margin-top:18px">Aa</button><button class="ms-2 grey" style="margin-top:18px" aria-label="文字阴影"><svg width="22" height="20" viewBox="0 0 22 20"><path d="M12 3q9 0 9 9v6h-6q-7-1-3-15z" fill="#ddd" stroke="none"/><path d="M1 3h14M8 3v15" stroke-width="3"/></svg></button></div>
          <div class="d-flex align-items-center grey" style="padding:25px 35px 0 4px"><svg width="20" height="14"><use href="#al"/></svg><svg class="hit" style="margin-left:12px" width="20" height="14"><use href="#ac"/></svg><svg style="margin-left:12px" width="20" height="14"><use href="#ar"/></svg><svg style="margin-left:12px" width="20" height="14"><use href="#aj"/></svg><svg class="ms-auto" width="22" height="22"><use href="#vt"/></svg><svg class="hit mx-2" width="22" height="22"><use href="#vm"/></svg><svg width="22" height="22"><use href="#vb"/></svg></div>
        </div>
        <div class="sec" style="height:85px"><div class="seclab">填充 <i class="tri"></i></div><div class="cell"><button class="sw mb-1" aria-label="填充颜色"><i style="background:#000"></i></button>颜色</div><div class="cell"><button class="sw mb-1" aria-label="填充图片"><i class="nil"></i></button>图片</div></div>
        <div class="sec" style="height:157px"><div class="seclab">线段 <i class="tri"></i></div><div class="cell"><button class="sw mb-1" aria-label="线段颜色"><i class="nil"></i></button>颜色</div><div class="cell"><input class="uline mb-1" style="width:43px;height:27px" id="lw" value="0"><label for="lw">线宽</label></div><div class="cell grey"><span class="box mb-1"><svg width="22" height="18"><use href="#lines"/></svg></span><span class="text-dark">类型</span></div>
          <span></span><span></span><div class="cell grey"><span class="box mb-1"><svg width="20" height="18" viewBox="0 0 20 18"><path d="M1 17V1h18v16" stroke-dasharray="2 2"/><path d="M0 17h20"/></svg></span><span class="text-dark">可见性</span></div><div class="cell ms-4 ps-3"><span class="box opacity-25 mb-1"><svg width="22" height="18"><use href="#arrows"/></svg></span>箭头样式</div></div>
        <div class="sec" style="height:83px"><div class="seclab">阴影 <i class="tri"></i></div><div class="cell"><button class="sw mb-1" aria-label="外部阴影"><i class="nil"></i></button>外部</div><div class="cell"><button class="sw mb-1" aria-label="内部阴影"><i class="nil"></i></button>内部</div></div>
        <div class="sec"><div class="seclab">圆角 <i class="tri"></i></div><div class="cell"><input class="uline faint mb-1" style="width:43px;height:27px" id="rad" placeholder="0"><label for="rad">半径</label></div><div class="cell"><span class="box opacity-25 mb-1"><svg width="20" height="18" viewBox="0 0 20 18"><path d="M1 17V9q1-8 9-8h9v16z"/></svg></span>可见性</div></div>
      </div>
    </aside>
  </div>
</div>
<div class="desk flex-shrink-0"></div>
<footer class="dock d-flex flex-shrink-0"><div class="db"></div><div class="dr"></div></footer>
</body>
</html>
